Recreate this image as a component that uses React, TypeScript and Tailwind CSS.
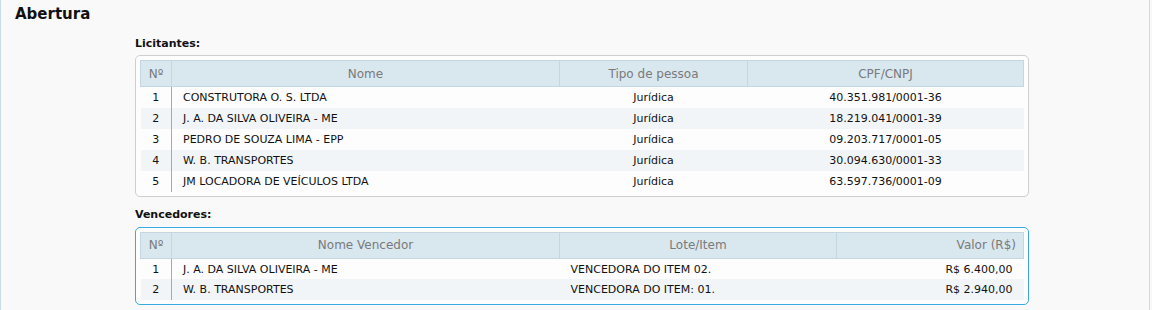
const licitantes = [
  { n: 1, nome: "CONSTRUTORA O. S. LTDA", tipo: "Jurídica", doc: "40.351.981/0001-36" },
  { n: 2, nome: "J. A. DA SILVA OLIVEIRA - ME", tipo: "Jurídica", doc: "18.219.041/0001-39" },
  { n: 3, nome: "PEDRO DE SOUZA LIMA - EPP", tipo: "Jurídica", doc: "09.203.717/0001-05" },
  { n: 4, nome: "W. B. TRANSPORTES", tipo: "Jurídica", doc: "30.094.630/0001-33" },
  { n: 5, nome: "JM LOCADORA DE VEÍCULOS LTDA", tipo: "Jurídica", doc: "63.597.736/0001-09" },
];

const vencedores = [
  { n: 1, nome: "J. A. DA SILVA OLIVEIRA - ME", lote: "VENCEDORA DO ITEM 02.", valor: "R$ 6.400,00" },
  { n: 2, nome: "W. B. TRANSPORTES", lote: "VENCEDORA DO ITEM: 01.", valor: "R$ 2.940,00" },
];

const th = "h-[26px] border border-[#c4d6e2] bg-[#d9e7ef] px-[7px] text-[12px] font-normal text-[#7a7a7a]";
const td = "h-[21px] px-[11px] pt-[2px] text-[11px] text-[#111]";

export default function App() {
  return (
    <div className="h-[310px] w-[1152px] bg-[#f9f9f9] font-['DejaVu_Sans','Verdana',sans-serif]">
      <div className="h-full w-[1150px] border-x border-[#c9dbe8]">
        <h2 className="pl-[14px] pt-[5px] text-[15px] font-bold leading-[18px] text-[#111]">Abertura</h2>
        <div className="ml-[134px] w-[894px]">
          <div className="mt-[14px] text-[11px] font-bold leading-[14px] text-[#111]">Licitantes:</div>
          <div className="mt-[4px] rounded-[5px] border border-[#cfcfcf] bg-[#fdfdfe] p-[4px]">
            <table className="w-full table-fixed border-collapse">
              <colgroup>
                <col className="w-[31px]" />
                <col className="w-[388px]" />
                <col className="w-[188px]" />
                <col />
              </colgroup>
              <thead>
                <tr>
                  <th className={th}>Nº</th>
                  <th className={th}>Nome</th>
                  <th className={th}>Tipo de pessoa</th>
                  <th className={th}>CPF/CNPJ</th>
                </tr>
              </thead>
              <tbody>
                {licitantes.map((l, i) => (
                  <tr key={l.n} className={i % 2 ? "bg-[#f1f5f8]" : "bg-[#fdfdfe]"}>
                    <td className={`${td} border-r border-[#a9a9a9] !px-0 text-center`}>{l.n}</td>
                    <td className={td}>{l.nome}</td>
                    <td className={`${td} text-center`}>{l.tipo}</td>
                    <td className={`${td} text-center`}>{l.doc}</td>
                  </tr>
                ))}
              </tbody>
            </table>
          </div>

          <div className="mt-[11px] text-[11px] font-bold leading-[14px] text-[#111]">Vencedores:</div>
          <div className="mt-[5px] rounded-[5px] border border-[#3aa9e0] bg-[#fdfdfe] p-[4px]">
            <table className="w-full table-fixed border-collapse">
              <colgroup>
                <col className="w-[31px]" />
                <col className="w-[388px]" />
                <col className="w-[277px]" />
                <col />
              </colgroup>
              <thead>
                <tr>
                  <th className={th}>Nº</th>
                  <th className={th}>Nome Vencedor</th>
                  <th className={th}>Lote/Item</th>
                  <th className={`${th} text-right`}>Valor (R$)</th>
                </tr>
              </thead>
              <tbody>
                {vencedores.map((v, i) => (
                  <tr key={v.n} className={i % 2 ? "bg-[#f1f5f8]" : "bg-[#fdfdfe]"}>
                    <td className={`${td} border-r border-[#a9a9a9] !px-0 text-center`}>{v.n}</td>
                    <td className={td}>{v.nome}</td>
                    <td className={td}>{v.lote}</td>
                    <td className={`${td} text-right`}>{v.valor}</td>
                  </tr>
                ))}
              </tbody>
            </table>
          </div>
        </div>
      </div>
    </div>
  );
}
